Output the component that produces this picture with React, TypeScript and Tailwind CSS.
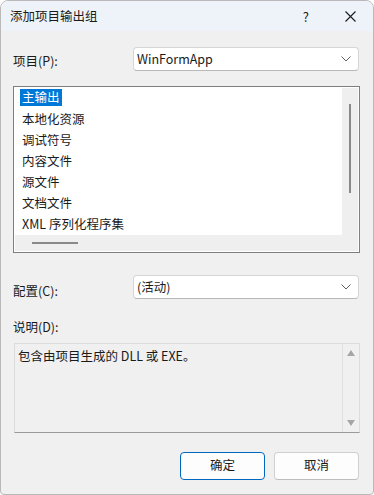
import React from "react";

const font = { fontFamily: '"Noto Sans CJK SC", "Noto Sans", sans-serif' };

function Chevron() {
  return (
    <svg width="10" height="6" viewBox="0 0 10 6" className="shrink-0">
      <path d="M0.5 0.5L5 5L9.5 0.5" fill="none" stroke="#606060" strokeWidth="1" />
    </svg>
  );
}

function Combo({ value }: { value: string }) {
  return (
    <div className="flex h-[24px] w-[226px] items-center justify-between rounded-[4px] border border-[#d6d6d6] border-b-[#b8b8b8] bg-white pl-[3px] pr-[7px] text-[12.5px] text-[#1a1a1a]">
      <span>{value}</span>
      <Chevron />
    </div>
  );
}

const items = ["主输出", "本地化资源", "调试符号", "内容文件", "源文件", "文档文件", "XML 序列化程序集"];

export default function App() {
  return (
    <div
      style={font}
      className="flex h-[495px] w-[374px] flex-col overflow-hidden rounded-t-[8px] rounded-b-[4px] border border-[#b9b9b9] bg-[#f0f0f0] text-[12.5px] leading-none text-[#1a1a1a]"
    >
      {/* Title bar */}
      <div className="flex h-[30px] shrink-0 items-center bg-[#eef3f9] pl-[9px]">
        <span className="text-[12.5px]">添加项目输出组</span>
        <span className="ml-auto mr-[36px] text-[13px]">?</span>
        <svg width="11" height="11" viewBox="0 0 11 11" className="mr-[17px]">
          <path d="M0.5 0.5L10.5 10.5M10.5 0.5L0.5 10.5" stroke="#1a1a1a" strokeWidth="1.1" />
        </svg>
      </div>

      {/* Body */}
      <div className="flex flex-col pl-[12px] pr-[13px]">
        <div className="mt-[16px] flex items-center">
          <span className="w-[120px] pt-[4px]">项目(P):</span>
          <Combo value="WinFormApp" />
        </div>

        {/* Listbox */}
        <div className="mt-[15px] flex h-[167px] w-[347px] flex-col border border-[#7e7e7e] bg-white p-[1px]">
          <div className="flex min-h-0 flex-1">
            <div className="-mt-[1px] flex-1 overflow-hidden pl-[5px]">
              {items.map((it, i) => (
                <div key={i} className="flex h-[21.2px] items-center">
                  <span
                    className={
                      i === 0
                        ? "flex h-[17px] items-center bg-[#0078d7] px-[2px] text-white"
                        : "flex h-[17px] items-center px-[2px]"
                    }
                  >
                    {it}
                  </span>
                </div>
              ))}
            </div>
            <div className="flex w-[16px] justify-center bg-[#efefef] pt-[16px]">
              <div className="h-[89px] w-[2px] bg-[#8a8a8a]" />
            </div>
          </div>
          <div className="flex h-[16px] items-center bg-[#efefef] pl-[17px]">
            <div className="h-[2px] w-[46px] bg-[#8a8a8a]" />
          </div>
        </div>

        <div className="mt-[22px] flex items-center">
          <span className="w-[120px] pt-[8px]">配置(C):</span>
          <Combo value="(活动)" />
        </div>

        <div className="mt-[22px]">说明(D):</div>

        {/* Description */}
        <div className="mt-[9px] ml-[1px] flex h-[90px] w-[346px] border border-[#dcdcdc] border-b-[#9a9a9a] bg-[#f0f0f0]">
          <div className="flex-1 pl-[3px] pt-[6px]">包含由项目生成的 DLL 或 EXE。</div>
          <div className="flex w-[17px] flex-col items-center justify-between border-l border-[#e2e2e2] pb-[6px] pt-[6px]">
            <svg width="8" height="6" viewBox="0 0 8 6">
              <path d="M4 0L8 6H0Z" fill="#a6a6a6" />
            </svg>
            <svg width="8" height="6" viewBox="0 0 8 6">
              <path d="M0 0H8L4 6Z" fill="#a6a6a6" />
            </svg>
          </div>
        </div>

        {/* Buttons */}
        <div className="mt-[19px] flex justify-end gap-[9px] pr-[1px]">
          <button className="flex h-[28px] w-[85px] items-center justify-center rounded-[4px] border border-[#0067c0] bg-[#fdfdfd] text-[12.5px]">
            确定
          </button>
          <button className="flex h-[28px] w-[85px] items-center justify-center rounded-[4px] border border-[#d0d0d0] border-b-[#bdbdbd] bg-[#fdfdfd] text-[12.5px]">
            取消
          </button>
        </div>
      </div>
    </div>
  );
}
